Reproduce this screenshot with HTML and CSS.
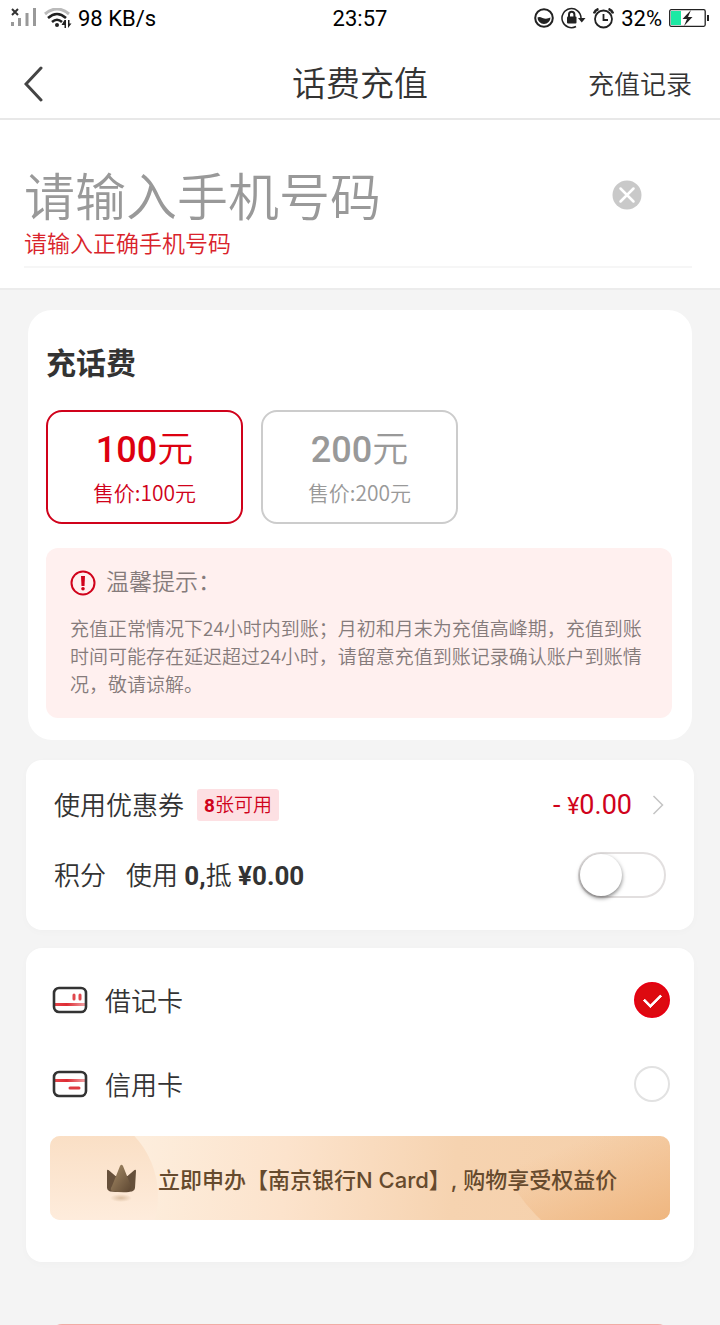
FILE: index.html
```html
<!DOCTYPE html>
<html lang="zh-CN">
<head>
    <meta charset="UTF-8">
    <meta name="viewport" content="width=device-width, initial-scale=1.0">
    <title>话费充值</title>
    <link rel="stylesheet" href="styles.css">
</head>
<body>
    <div class="app">
        <div class="status-bar">
            <div class="status-left">
                <svg width="28" height="20" viewBox="0 0 28 20">
                    <path d="M2 1l6 6M8 1L2 7" stroke="#333" stroke-width="2"/>
                    <path d="M2.500 18v-4M9.500 18v-8M17 18V5M24.500 18V0" stroke="#999" stroke-width="3"/>
                </svg>
                <svg width="28" height="21" viewBox="0 0 28 21" fill="none">
                    <path d="M1 6Q13-4 25 6" stroke="#bbb" stroke-width="3"/>
                    <path d="M4 10Q13 2 22 10M8 14Q13 9.500 18 14" stroke="#222" stroke-width="2.500"/>
                    <circle cx="13" cy="17" r="2" fill="#222"/>
                    <path d="M22 12v8h-1.500v-3h-3l3-5zM24 12v8l3.500-4.500h-2V12z" fill="#222"/>
                </svg>
                <span>98 KB/s</span>
            </div>
            <span>23:57</span>
            <div class="status-right">
                <svg width="20" height="20" viewBox="0 0 20 20">
                    <circle cx="10" cy="10" r="8.800" fill="none" stroke="#222" stroke-width="2"/>
                    <path d="M3.500 9.500q2-1 5 .5 4 1.500 8-.5a6.500 6.500 0 0 1-13 0z" fill="#222"/>
                </svg>
                <svg width="25" height="22" viewBox="0 0 25 22" fill="none">
                    <path d="M15 19.500A9.500 9.500 0 1 1 20 11" stroke="#222" stroke-width="1.500"/>
                    <path d="M17 11h7.500l-3.700 4.500z" fill="#222"/>
                    <rect x="6" y="9.500" width="9.500" height="7" rx="1" fill="#222"/>
                    <path d="M8 10V7.500a2.700 2.700 0 0 1 5.400 0V10" stroke="#222" stroke-width="2"/>
                </svg>
                <svg width="21" height="21" viewBox="0 0 21 21" fill="none" stroke="#222">
                    <circle cx="10.500" cy="11" r="8.500" stroke-width="1.800"/>
                    <path d="M10.500 6v6h4.500" stroke-width="1.800"/>
                    <path d="M1 5.500Q2 2 5.500 1M20 5.500Q19 2 15.500 1" stroke-width="2.500"/>
                </svg>
                <span>32%</span>
                <svg width="41" height="18" viewBox="0 0 41 18">
                    <rect x=".7" y=".7" width="35.500" height="16.600" rx="1.500" fill="none" stroke="#222" stroke-width="1.300"/>
                    <path d="M2 2h10v14H2z" fill="#1de9a4"/>
                    <path d="M38 6h2v6h-2z" fill="#222"/>
                    <path d="M22 1l-8.500 9h4.500l-3 7 8.500-9h-4.500z" fill="#222"/>
                </svg>
            </div>
        </div>

        <header class="nav-bar">
            <button class="back-btn" type="button" aria-label="返回">
                <svg width="20" height="36" viewBox="0 0 20 36" fill="none">
                    <path d="M17 2L2 18l15 16" stroke="#444" stroke-width="3" stroke-linecap="round"/>
                </svg>
            </button>
            <h1>话费充值</h1>
            <a class="history-link" href="#">充值记录</a>
        </header>

        <section class="phone-section">
            <div class="phone-field">
                <div class="phone-row">
                    <input type="tel" id="phone" placeholder="请输入手机号码" aria-label="手机号码" aria-describedby="phone-error">
                    <button class="clear-btn" type="button" aria-label="清除">
                        <svg width="30" height="30" viewBox="0 0 30 30">
                            <circle cx="15" cy="15" r="14.500" fill="#c9c9c9"/>
                            <path d="M8.500 8.500l13 13M21.500 8.500l-13 13" stroke="#fff" stroke-width="2.500" stroke-linecap="round"/>
                        </svg>
                    </button>
                </div>
                <p class="phone-error" id="phone-error">请输入正确手机号码</p>
            </div>
        </section>

        <main>
            <section class="card amount-card">
                <h2>充话费</h2>
                <div class="amount-list">
                    <button class="amount active" type="button">
                        <span class="amount-value"><b>100</b>元</span>
                        <span class="amount-price">售价:100元</span>
                    </button>
                    <button class="amount" type="button">
                        <span class="amount-value"><b>200</b>元</span>
                        <span class="amount-price">售价:200元</span>
                    </button>
                </div>
                <div class="tips">
                    <div class="tips-title">
                        <svg width="26" height="26" viewBox="0 0 26 26">
                            <circle cx="13" cy="13" r="11.500" fill="none" stroke="#d0021b" stroke-width="2"/>
                            <path d="M11 6h4l-.5 10h-3z" fill="#d0021b"/>
                            <circle cx="13" cy="18.800" r="1.800" fill="#d0021b"/>
                        </svg>
                        <span>温馨提示：</span>
                    </div>
                    <p>充值正常情况下24小时内到账；月初和月末为充值高峰期，充值到账时间可能存在延迟超过24小时，请留意充值到账记录确认账户到账情况，敬请谅解。</p>
                </div>
            </section>

            <section class="card discount-card">
                <div class="row">
                    <span class="row-title">使用优惠券</span>
                    <span class="badge"><b>8</b>张可用</span>
                    <a class="coupon-value" href="#">
                        <span>- <small>¥</small>0.00</span>
                        <svg width="12" height="20" viewBox="0 0 12 20" fill="none">
                            <path d="M1.500 1l9 9-9 9" stroke="#c4c4c4" stroke-width="1.500"/>
                        </svg>
                    </a>
                </div>
                <div class="row">
                    <label class="row-title" for="points">积分</label>
                    <span class="points-text">使用 <b>0,</b>抵 <b>¥0.00</b></span>
                    <input class="switch" type="checkbox" id="points">
                </div>
            </section>

            <section class="card pay-card">
                <label class="pay-option">
                    <svg width="36" height="28" viewBox="0 0 36 28" fill="none">
                        <defs>
                            <linearGradient id="stripe" gradientUnits="userSpaceOnUse" x1="2" y1="0" x2="34" y2="0">
                                <stop offset="0" stop-color="#e8454b"/>
                                <stop offset=".4" stop-color="#dd2c34"/>
                                <stop offset="1" stop-color="#f2a5a8"/>
                            </linearGradient>
                        </defs>
                        <path d="M3 18.500h30" stroke="url(#stripe)" stroke-width="3"/>
                        <path d="M22 9v4M28 9v4" stroke="#e0474d" stroke-width="3" stroke-linecap="round"/>
                        <rect x="2" y="2" width="32" height="24" rx="5" stroke="#333" stroke-width="2.600"/>
                    </svg>
                    <span>借记卡</span>
                    <input type="radio" name="pay" checked>
                </label>
                <label class="pay-option">
                    <svg width="36" height="28" viewBox="0 0 36 28" fill="none">
                        <path d="M3 10.500h30" stroke="url(#stripe)" stroke-width="3"/>
                        <path d="M18 18h9" stroke="#dd3a41" stroke-width="3" stroke-linecap="round"/>
                        <rect x="2" y="2" width="32" height="24" rx="5" stroke="#333" stroke-width="2.600"/>
                    </svg>
                    <span>信用卡</span>
                    <input type="radio" name="pay">
                </label>
                <a class="banner" href="#">
                    <svg class="banner-bg" viewBox="0 0 620 84" preserveAspectRatio="xMidYMid slice">
                        <defs>
                            <linearGradient id="glow-left" gradientUnits="userSpaceOnUse" x1="0" y1="0" x2="0" y2="84">
                                <stop offset="0" stop-color="#fadfc5"/>
                                <stop offset="1" stop-color="#feecdc"/>
                            </linearGradient>
                            <linearGradient id="glow-right" gradientUnits="userSpaceOnUse" x1="540" y1="0" x2="580" y2="100">
                                <stop offset="0" stop-color="#f0b883" stop-opacity="0"/>
                                <stop offset="1" stop-color="#efb67f"/>
                            </linearGradient>
                        </defs>
                        <circle cx="20" cy="60" r="88" fill="url(#glow-left)"/>
                        <circle cx="592" cy="-27" r="150" fill="url(#glow-right)"/>
                    </svg>
                    <svg class="banner-icon" width="32" height="38" viewBox="0 0 32 38">
                        <defs>
                            <linearGradient id="crown" x1="0" y1="0" x2="1" y2="1">
                                <stop offset="0" stop-color="#a88d68"/>
                                <stop offset="1" stop-color="#5c4631"/>
                            </linearGradient>
                            <radialGradient id="shade">
                                <stop offset="0" stop-color="#dcbfa2"/>
                                <stop offset="1" stop-color="#dcbfa2" stop-opacity="0"/>
                            </radialGradient>
                        </defs>
                        <path d="M1 7q0-2 1.500-1l7 6h12l7-6q1.500-1 1.500 1l-1 17q-.3 3-3 3.500-10 1-22 0-2.700-.5-3-3.500z" fill="#66503b"/>
                        <path d="M6 27q-2.500-1 0-5l8-20q1.500-2.500 3 0l8 20q1 4-2 6-8 1-17-1z" fill="url(#crown)"/>
                        <ellipse cx="15" cy="34" rx="11" ry="4" fill="url(#shade)"/>
                    </svg>
                    <span>立即申办【南京银行N Card】, 购物享受权益价</span>
                </a>
            </section>

            <button class="submit-btn" type="button" aria-label="提交" disabled></button>
        </main>
    </div>
</body>
</html>
```
FILE: styles.css
```css
* {
    box-sizing: border-box;
}

body {
    margin: 0;
    font-family: Roboto, "Noto Sans CJK SC", sans-serif;
    font-size: 26px;
    font-weight: 350;
    color: #333;
    background-color: #f4f4f4;
}

button,
input {
    font: inherit;
    color: inherit;
    margin: 0;
    padding: 0;
    border: none;
    background: none;
}

button {
    cursor: pointer;
}

a {
    color: inherit;
    text-decoration: none;
}

h1,
h2,
p {
    margin: 0;
}

b {
    font-weight: 700;
}

svg {
    display: block;
    flex-shrink: 0;
}

.app {
    height: 100vh;
    overflow: hidden;
}

/* status bar */
.status-bar {
    display: grid;
    grid-template-columns: 1fr auto 1fr;
    align-items: center;
    height: 36px;
    padding: 0 10px;
    font-size: 22px;
    font-weight: 400;
    color: #000;
    background-color: #fff;
}

.status-left,
.status-right {
    display: flex;
    align-items: center;
    gap: 7px;
}

.status-left {
    gap: 6px;
}

.status-right {
    justify-content: flex-end;
}

/* header */
.nav-bar {
    display: grid;
    grid-template-columns: 1fr auto 1fr;
    align-items: center;
    height: 84px;
    padding: 14px 24px 0;
    background-color: #fff;
    border-bottom: 2px solid #e8e8e8;
}

.nav-bar h1 {
    font-size: 34px;
    font-weight: inherit;
    line-height: 44px;
}

.back-btn {
    justify-self: start;
}

.history-link {
    justify-self: end;
    padding: 0 4px 4px 0;
}

/* phone number */
.phone-section {
    padding: 40px 28px 20px 24px;
    background-color: #fff;
    border-bottom: 2px solid #ececec;
}

.phone-field {
    border-bottom: 2px solid #f6f6f6;
}

.phone-row {
    display: flex;
    align-items: center;
    height: 70px;
    padding-right: 50px;
}

.phone-row input {
    flex: 1;
    min-width: 0;
    height: 70px;
    padding-top: 6px;
    font-size: 51px;
    outline: none;
}

.phone-row input::placeholder {
    color: #999;
}

.phone-error {
    height: 36px;
    font-size: 23px;
    line-height: 30px;
    color: #d9232b;
}

/* cards */
main {
    padding: 20px 26px;
}

.card {
    background-color: #fff;
    border-radius: 16px;
    box-shadow: 0 2px 8px rgba(0, 0, 0, 0.02);
}

.amount-card {
    margin: 0 2px 20px;
    padding: 32px 20px 22px 18px;
    border-radius: 24px;
    box-shadow: none;
}

.amount-card h2 {
    font-size: 30px;
    font-weight: 700;
    line-height: 44px;
}

.amount-list {
    display: flex;
    gap: 18px;
    margin: 24px 0;
}

.amount {
    display: flex;
    flex-direction: column;
    align-items: center;
    width: 197px;
    height: 114px;
    padding-top: 16px;
    color: #999;
    border: 2px solid #ccc;
    border-radius: 16px;
}

.amount-value {
    font-size: 36px;
    line-height: 44px;
}

.amount-value b {
    font-weight: 500;
}

.amount-price {
    font-family: "Noto Sans CJK SC", sans-serif;
    font-size: 21px;
    line-height: 40px;
}

.amount.active {
    color: #d0021b;
    border-color: #d0021b;
}

.amount.active .amount-value {
    color: #dd0010;
}

.tips {
    padding: 20px 24px;
    color: #857b7b;
    background-color: #fff0ef;
    border-radius: 12px;
}

.tips-title {
    display: flex;
    align-items: center;
    gap: 10px;
    height: 30px;
    font-size: 23px;
    line-height: 30px;
}

.tips p {
    margin-top: 16px;
    font-family: "Noto Sans CJK SC", sans-serif;
    font-size: 19px;
    line-height: 28px;
}

/* coupon and points */
.discount-card {
    margin-bottom: 18px;
    padding: 10px 28px 20px;
}

.row {
    display: flex;
    align-items: center;
    height: 70px;
}

.row-title,
.points-text {
    padding-bottom: 4px;
}

.badge {
    margin-left: 13px;
    padding: 2px 7px 0;
    font-size: 19px;
    line-height: 30px;
    color: #d0021b;
    background-color: #fde0e3;
    border-radius: 3px;
}

.coupon-value {
    display: flex;
    align-items: center;
    gap: 20px;
    margin-left: auto;
    margin-right: 2px;
    font-size: 27px;
    font-weight: 400;
    color: #d0021b;
}

.coupon-value small {
    font-size: 23px;
}

.points-text {
    margin-left: 20px;
}

.switch {
    appearance: none;
    width: 88px;
    height: 46px;
    margin-left: auto;
    border: 2px solid #e2dfdf;
    border-radius: 23px;
}

.switch::before {
    content: "";
    display: block;
    width: 42px;
    height: 42px;
    background-color: #fff;
    border-radius: 50%;
    box-shadow: 0 2px 4px rgba(0, 0, 0, 0.5);
}

.switch:checked {
    background-color: #dd0010;
}

.switch:checked::before {
    margin-left: auto;
}

/* payment methods */
.pay-card {
    padding: 10px 24px 42px;
}

.pay-option {
    display: flex;
    align-items: center;
    gap: 17px;
    height: 84px;
    padding-left: 2px;
}

.pay-option span {
    padding-bottom: 2px;
}

.pay-option input {
    appearance: none;
    width: 36px;
    height: 36px;
    margin-left: auto;
    border: 2px solid #e2e2e2;
    border-radius: 50%;
}

.pay-option input:checked {
    display: flex;
    align-items: center;
    justify-content: center;
    background-color: #dd0a10;
    border-color: #e60012;
}

.pay-option input:checked::before {
    content: "";
    width: 14px;
    height: 8px;
    margin-bottom: 4px;
    border: solid #fff;
    border-width: 0 0 3px 3px;
    border-radius: 1px;
    transform: rotate(-45deg);
}

.banner {
    position: relative;
    display: flex;
    align-items: center;
    gap: 20px;
    height: 84px;
    margin-top: 10px;
    padding-left: 56px;
    overflow: hidden;
    font-family: Inter, "Noto Sans CJK SC", sans-serif;
    font-size: 22px;
    font-weight: 500;
    color: #664a2d;
    white-space: nowrap;
    background: linear-gradient(95deg, #fdeddc 15%, #fce3cc 38%, #f6d3b0 65%, #f5cfa9 100%);
    border-radius: 10px;
    isolation: isolate;
}

.banner-bg {
    position: absolute;
    inset: 0;
    z-index: -1;
    width: 100%;
    height: 100%;
}

.banner-icon {
    margin-top: 10px;
}

.submit-btn {
    display: block;
    width: calc(100% - 48px);
    height: 88px;
    margin: 62px 24px 0;
    background-color: #f3aaa4;
    border-radius: 12px;
}
```
